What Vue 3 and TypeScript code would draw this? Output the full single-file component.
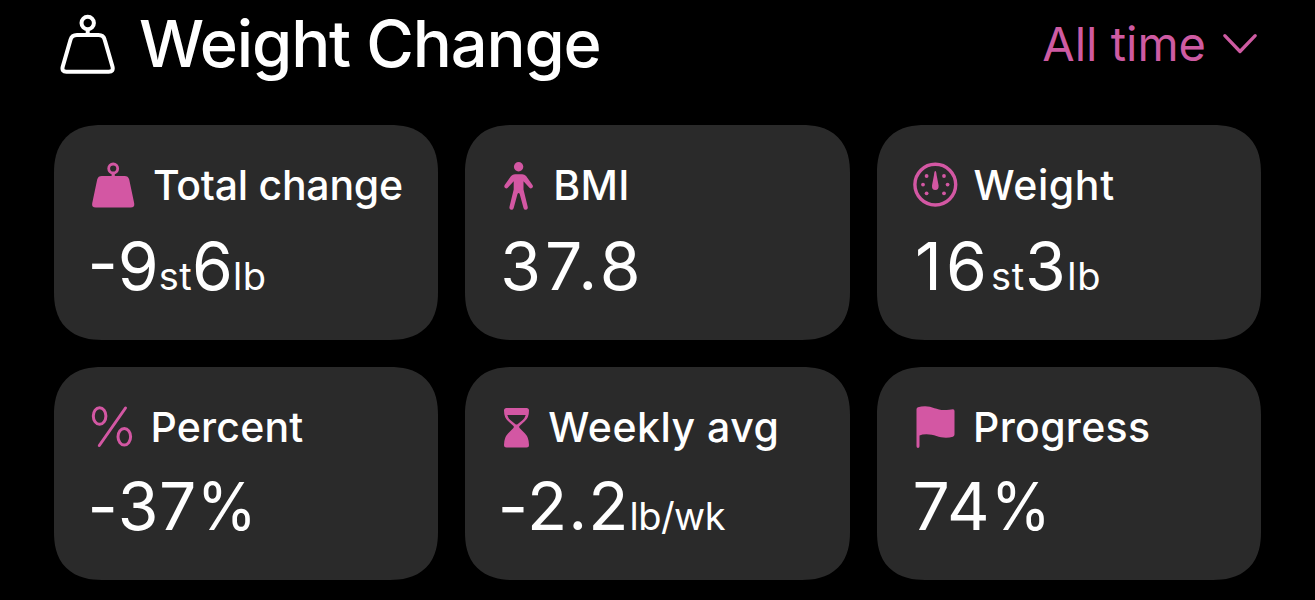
<script setup lang="ts">
type Kind = 'number' | 'unit' | 'sign'
interface Part {
  text: string
  kind: Kind
}
interface Stat {
  id: string
  label: string
  parts: Part[]
}

const num = (text: string): Part => ({ text, kind: 'number' })
const unit = (text: string): Part => ({ text, kind: 'unit' })
const sign = (text: string): Part => ({ text, kind: 'sign' })

const stats: Stat[] = [
  { id: 'total', label: 'Total change', parts: [num('-9'), unit('st'), num('6'), unit('lb')] },
  { id: 'bmi', label: 'BMI', parts: [num('37.8')] },
  { id: 'weight', label: 'Weight', parts: [num('16'), unit('st'), num('3'), unit('lb')] },
  { id: 'percent', label: 'Percent', parts: [num('-37'), sign('%')] },
  { id: 'weekly', label: 'Weekly avg', parts: [num('-2.2'), unit('lb/wk')] },
  { id: 'progress', label: 'Progress', parts: [num('74'), sign('%')] },
]
</script>

<template>
  <main class="screen">
    <header class="header">
      <svg class="title-icon" width="56" height="62" viewBox="0 0 56 62" fill="none" stroke="#fff" stroke-width="4">
        <circle cx="27.7" cy="10" r="6.2" />
        <path d="M27.7 16v6" />
        <path d="M17 22h21.500q5 0 6.200 4.700l7.800 27q1.200 5-3.700 5H6.400q-4.900 0-3.700-5l7.800-27q1.300-4.700 6.500-4.700z" />
      </svg>
      <h1 class="title">Weight Change</h1>
      <button class="range" type="button">
        <span>All time</span>
        <svg width="36" height="22" viewBox="0 0 36 22" fill="none" stroke="currentColor" stroke-width="3.300" stroke-linecap="round" stroke-linejoin="round">
          <path d="M2.800 2.700 18 18.500 33.200 2.700" />
        </svg>
      </button>
    </header>

    <section class="grid">
      <article v-for="stat in stats" :key="stat.id" class="card" :class="stat.id">
        <div class="heading">
          <svg v-if="stat.id === 'total'" class="icon" viewBox="0 0 44 48">
            <circle cx="22.200" cy="7.500" r="4.500" fill="none" stroke="currentColor" stroke-width="2.800" />
            <path d="M20.600 11.500h3.200V16h-3.200z" />
            <path d="M10.800 15h22.800q3.600 0 4.600 3.400l5 23.800q.8 4.300-3.600 4.300H4.800q-4.400 0-3.600-4.300l5-23.800q1-3.400 4.600-3.400z" />
          </svg>
          <svg v-else-if="stat.id === 'bmi'" class="icon" viewBox="0 0 44 48">
            <circle cx="16.600" cy="5.800" r="4.700" />
            <path d="M13 13.200h7.200q2.300 0 3.900 1.700l6.400 9.200q1.100 1.900-.5 3-1.500.9-2.800-.6l-5.700-6.300v8.300l4.200 17.300q.5 2.500-1.500 3-2 .4-2.700-1.800L17.700 33q-1.100-2.200-2.200 0l-3.800 14q-.7 2.200-2.700 1.800-2-.5-1.500-3l4.200-17.300v-8.300L6 26.500q-1.300 1.500-2.800.6-1.600-1.100-.5-3l6.400-9.200q1.600-1.700 3.900-1.700z" />
          </svg>
          <svg v-else-if="stat.id === 'weight'" class="icon" viewBox="0 0 44 48">
            <circle cx="21.300" cy="23.600" r="20.400" fill="none" stroke="currentColor" stroke-width="3.400" />
            <path d="M21.300 10q1 0 1.300 4l2 10.500q.3 4.500-3.300 4.500t-3.300-4.500l2-10.500q.3-4 1.300-4z" />
            <circle cx="12.600" cy="15" r="1.900" />
            <circle cx="30" cy="15" r="1.900" />
            <circle cx="9" cy="23.600" r="1.900" />
            <circle cx="33.600" cy="23.600" r="1.900" />
            <circle cx="12.600" cy="32.300" r="1.900" />
            <circle cx="30" cy="32.300" r="1.900" />
          </svg>
          <svg v-else-if="stat.id === 'percent'" class="icon" viewBox="0 0 44 48">
            <g fill="none" stroke="currentColor" stroke-width="3" stroke-linecap="round">
              <ellipse cx="8.600" cy="13" rx="6.300" ry="8.300" />
              <ellipse cx="33.300" cy="33.800" rx="6.300" ry="8.300" />
              <path d="M34.500 5 8.300 42.500" />
            </g>
          </svg>
          <svg v-else-if="stat.id === 'weekly'" class="icon" viewBox="0 0 44 48">
            <path fill-rule="evenodd" d="M4.500 5h20q2.500 0 2.500 2.500 0 7-4 10.500l-5.200 4.800q-1.300 1.200 0 2.400L23 30.500q4 4 4 11.500 0 2.500-2.500 2.500h-20Q2 44.500 2 42q0-7.500 4-11.500l5.200-5.300q1.300-1.200 0-2.400L6 18Q2 14.500 2 7.500 2 5 4.500 5zM5.300 12q.8 3 3 5l5.200 4.200q1 .8 2 0l5.200-4.200q2.200-2 3-5z" />
          </svg>
          <svg v-else class="icon" viewBox="0 0 44 48">
            <path d="M2.500 6.300q0-1.300 1.500-2Q7 3.200 11 3.200c7 0 12 3.800 19 3.800 4 0 6.500-.8 9-.8q1.500 0 1.500 1.800v23.500q0 1.600-1.500 2.200-3.500 1-7 1c-7 0-12-3.500-19.500-3.500q-4.500 0-7 1.300v10.800q0 1.700-1.500 1.700t-1.500-1.700z" />
          </svg>
          <h2 class="label">{{ stat.label }}</h2>
        </div>
        <p class="value"><span v-for="(part, i) in stat.parts" :key="i" :class="part.kind">{{ part.text }}</span></p>
      </article>
    </section>
  </main>
</template>

<style>
body {
  background: #000;
}
</style>

<style scoped>
.screen {
  box-sizing: border-box;
  width: 1315px;
  height: 600px;
  padding: 0 54px 20px;
  display: flex;
  flex-direction: column;
  background: #000;
  color: #fff;
  font-family: Inter, "Liberation Sans", sans-serif;
  overflow: hidden;
}
.header {
  box-sizing: border-box;
  height: 125px;
  padding: 13px 3px 0 6px;
  display: flex;
  align-items: flex-start;
}
.title-icon {
  flex: none;
}
.title {
  margin: -9px 0 0 23px;
  font-size: 65px;
  line-height: 80px;
  font-weight: 500;
  letter-spacing: -1.150px;
  white-space: nowrap;
}
.range {
  margin: 6px 0 0 auto;
  padding: 0;
  border: 0;
  background: none;
  display: flex;
  align-items: center;
  gap: 16px;
  color: #ce5ba2;
  font: 400 47px/50px Inter, "Liberation Sans", sans-serif;
  white-space: nowrap;
}
.grid {
  flex: 1;
  display: grid;
  grid-template-columns: repeat(3, 384.300px);
  grid-template-rows: 215px 213px;
  gap: 27px;
}
.card {
  box-sizing: border-box;
  padding: 36px 0 39px 37px;
  display: flex;
  flex-direction: column;
  justify-content: space-between;
  border-radius: 40px;
  background: #2a2a2a;
}
@supports (corner-shape: superellipse(1.25)) {
  .card {
    border-radius: 48px;
    corner-shape: superellipse(1.25);
  }
}
.heading {
  height: 48px;
  display: flex;
  align-items: center;
}
.icon {
  flex: none;
  width: 44px;
  height: 48px;
  overflow: visible;
  color: #d357a3;
  fill: currentColor;
}
.label {
  margin: 0 0 0 18px;
  font-size: 41px;
  line-height: 48px;
  font-weight: 500;
  white-space: nowrap;
}
.value {
  margin: 0 0 0 -3.500px;
  height: 70px;
  line-height: 70px;
  white-space: nowrap;
}
.number {
  font-size: 66px;
}
.unit {
  font-size: 38px;
}
.sign {
  display: inline-block;
  font-size: 66px;
  transform: scaleX(0.92);
  transform-origin: left;
}

/* Optical spacing of each card's label and figures */
.total .label {
  letter-spacing: -0.250px;
}
.total .unit {
  letter-spacing: 0.400px;
}
.bmi .label {
  margin-left: 7px;
  letter-spacing: 0.300px;
}
.bmi .value {
  margin-left: -2px;
}
.bmi .number {
  letter-spacing: 4px;
}
.weight .label {
  margin-left: 16px;
  letter-spacing: 0.600px;
}
.weight .value {
  margin-left: 1.500px;
}
.weight .number {
  letter-spacing: 1.500px;
}
.weight .number:first-child {
  letter-spacing: 4px;
}
.weight .unit {
  letter-spacing: 0.800px;
}
.percent .label {
  margin-left: 15.500px;
  letter-spacing: 0.200px;
}
.percent .number {
  letter-spacing: 0.600px;
}
.weekly .label {
  margin-left: 2px;
  letter-spacing: 0.500px;
}
.weekly .value {
  margin-left: -4.500px;
}
.weekly .number {
  letter-spacing: 1px;
}
.weekly .unit {
  letter-spacing: -0.500px;
}
.progress .label {
  margin-left: 15.500px;
  letter-spacing: 0.300px;
}
.progress .value {
  margin-left: -1px;
}
.progress .number {
  letter-spacing: 1px;
}
</style>
